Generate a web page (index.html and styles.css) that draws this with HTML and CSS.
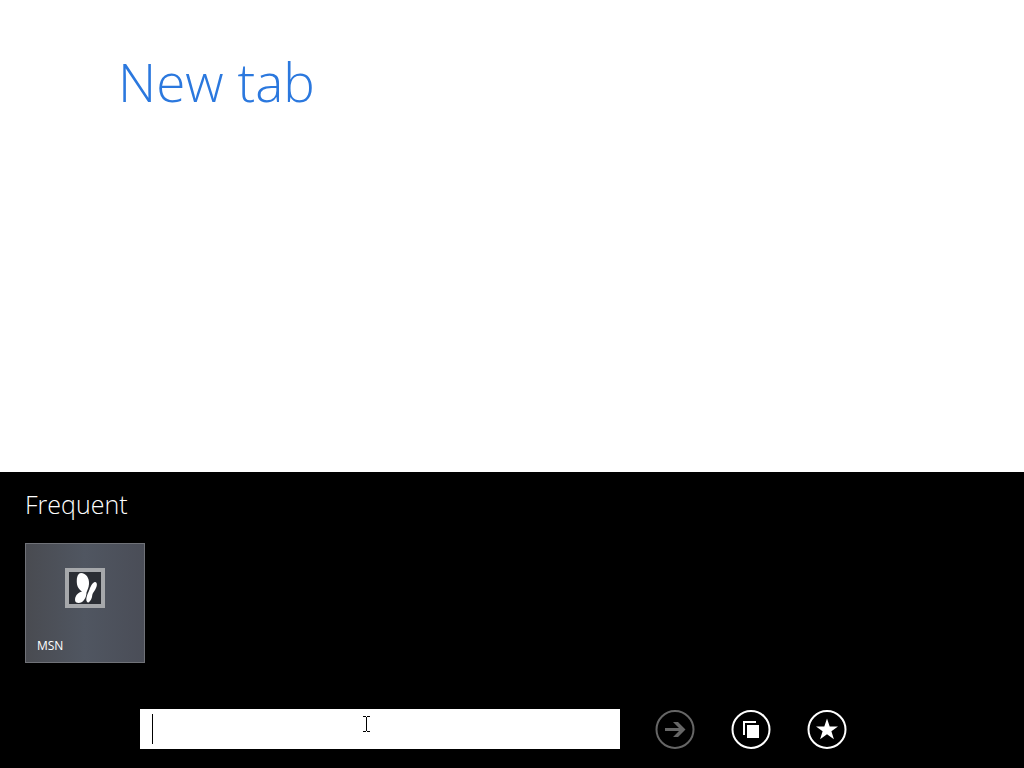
FILE: index.html
```html
<!DOCTYPE html>
<html lang="en">

<head>
    <meta charset="UTF-8">
    <meta name="viewport" content="width=device-width, initial-scale=1.0">
    <title>New tab</title>

    <link rel="stylesheet" href="styles.css">
</head>

<body>
    <main class="page">
        <h1>New tab</h1>
    </main>

    <footer class="dock">
        <section class="frequent">
            <h2>Frequent</h2>
            <a class="tile" href="#msn">
                <span class="tile-icon">
                    <svg viewBox="0 0 32 32" aria-hidden="true">
                        <path d="M12 1C17 1 20.500 6 20 12C19.800 16 18 18.500 17.500 20.500C17.500 26 14 31 9.500 31C6 31 5.500 28 6.500 25C7.500 22 10 20.500 13 19.500C9 17 7.500 13 7.800 8C8 4 9.500 1 12 1z" />
                        <path d="M26 10C29 10.500 28 15 26 18C25 20 23.500 21 23.300 23C23 26 22 29 19.500 30.500C17.500 30.500 17 28 17.500 25.500C18.200 22.500 19.500 20 20.500 17.500C21.500 14.500 23.500 10.500 26 10z" />
                    </svg>
                </span>
                <span class="tile-label">MSN</span>
            </a>
        </section>

        <form class="address-bar">
            <div class="address">
                <input type="text" aria-label="Address">
                <span class="caret"></span>
                <svg class="pointer" viewBox="0 0 7 16" aria-hidden="true">
                    <path d="M0 .5H3M4 .5H7M3.500 1V15M0 15.500H3M4 15.500H7" />
                </svg>
            </div>
            <div class="actions">
                <button class="round" type="submit" aria-label="Go" disabled>
                    <svg viewBox="0 0 40 40">
                        <circle cx="20" cy="20.500" r="18.500" />
                        <path d="M10 19H24L18 13H23L30.500 20.500L23 28H18L24 22H10z" />
                    </svg>
                </button>
                <button class="round" type="button" aria-label="Tabs">
                    <svg viewBox="0 0 40 40">
                        <circle cx="20" cy="20.500" r="18.500" />
                        <path d="M12 12H25V14H14V26H12z" />
                        <path d="M16 16H28V29H16z" />
                    </svg>
                </button>
                <button class="round" type="button" aria-label="Favorites">
                    <svg viewBox="0 0 40 40">
                        <circle cx="20" cy="20.500" r="18.500" />
                        <path d="M20 9.500L22.700 17.400H31L24.400 22.300L26.900 30.200L20 25.300L13.100 30.200L15.600 22.300L9 17.400H17.300z" />
                    </svg>
                </button>
            </div>
        </form>
    </footer>
</body>

</html>
```
FILE: styles.css
```css
* {
    --blue: rgb(43, 120, 222);
    box-sizing: border-box;
}

body {
    background-color: white;
    display: flex;
    flex-direction: column;
    font-family: "Open Sans", "Noto Sans", sans-serif;
    margin: 0;
    min-height: 100vh;
}

h1,
h2 {
    font-weight: 300;
    margin: 0;
}

.page {
    flex: 1;
    padding: 48px 118px;
}

h1 {
    color: var(--blue);
    font-size: 53px;
    line-height: 68px;
}

.dock {
    background-color: black;
    color: white;
    padding: 16px 25px 19px;
}

h2 {
    font-size: 25px;
    line-height: 32px;
    margin-bottom: 23px;
}

.tile {
    align-items: center;
    background: linear-gradient(to right, rgb(73, 75, 81), rgb(80, 86, 97), rgb(74, 77, 87));
    border: 1px solid rgb(112, 114, 120);
    color: white;
    display: flex;
    flex-direction: column;
    height: 120px;
    justify-content: space-between;
    padding: 24px 11px 8px;
    text-decoration: none;
    width: 120px;
}

.tile-icon {
    background-color: rgb(43, 46, 52);
    border: 4px solid rgb(166, 168, 171);
    height: 40px;
    width: 40px;
}

.tile-icon svg {
    display: block;
    fill: white;
}

.tile-label {
    align-self: flex-start;
    font-size: 12px;
    line-height: 16px;
}

.address-bar {
    align-items: center;
    display: flex;
    gap: 35px;
    margin: 46px 152px 0 115px;
}

.address {
    flex: 1;
    position: relative;
}

.address input {
    background-color: white;
    border: 0;
    display: block;
    font: inherit;
    font-size: 20px;
    height: 40px;
    outline: none;
    padding: 0 12px;
    width: 100%;
}

.caret {
    background-color: black;
    height: 30px;
    left: 12px;
    position: absolute;
    top: 5px;
    width: 1px;
}

.pointer {
    height: 16px;
    left: 223px;
    position: absolute;
    stroke: black;
    top: 7px;
    width: 7px;
}

.actions {
    display: flex;
    gap: 36px;
}

.round {
    background: none;
    border: 0;
    color: white;
    height: 40px;
    padding: 0;
    width: 40px;
}

.round:disabled {
    color: rgb(102, 102, 102);
}

.round svg {
    display: block;
    fill: currentColor;
}

.round circle {
    fill: none;
    stroke: currentColor;
    stroke-width: 2;
}
```
